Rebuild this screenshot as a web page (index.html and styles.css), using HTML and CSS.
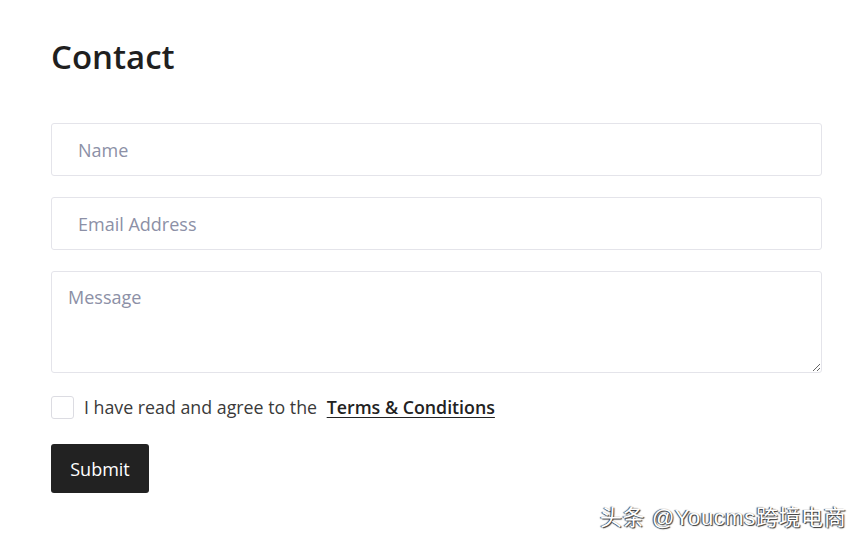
FILE: index.html
```html
<!DOCTYPE html>
<html lang="en">
<head>
    <meta charset="UTF-8">
    <meta name="viewport" content="width=device-width, initial-scale=1.0">
    <title>Contact</title>
    <link rel="stylesheet" href="styles.css">
</head>
<body>
    <div class="page">
        <h1 class="title">Contact</h1>
        <form class="contact-form">
            <input class="field" type="text" placeholder="Name">
            <input class="field" type="email" placeholder="Email Address">
            <textarea class="field message" placeholder="Message"></textarea>
            <label class="agree">
                <input class="check" type="checkbox">
                <span>I have read and agree to the <a href="#" class="terms">Terms &amp; Conditions</a></span>
            </label>
            <button class="submit" type="button">Submit</button>
        </form>
    </div>
    <div class="watermark">头条 @Youcms跨境电商</div>
</body>
</html>
```
FILE: styles.css
```css
body {
    margin: 0;
    background-color: #fff;
    font-family: "Open Sans", Arial, sans-serif;
    color: #222;
}
.page {
    padding: 34px 43px 0 51px;
}
.title {
    margin: 0 0 43px;
    font-size: 33px;
    font-weight: 600;
    line-height: 46px;
    color: #1f1f1f;
}
.contact-form {
    display: flex;
    flex-direction: column;
    gap: 21px;
}
.field {
    box-sizing: border-box;
    width: 771px;
    height: 53px;
    padding: 0 26px;
    border: 1px solid #e4e4ea;
    border-radius: 3px;
    font-family: "Open Sans", Arial, sans-serif;
    font-size: 18px;
    color: #333;
    outline: none;
}
.field::placeholder {
    color: #8c90a6;
}
.message {
    height: 102px;
    padding: 13px 16px;
    resize: vertical;
}
.agree {
    display: flex;
    align-items: center;
    gap: 10px;
    font-size: 17.8px;
    color: #3a3a3a;
    margin-top: 1px;
}
.check {
    appearance: none;
    width: 23px;
    height: 23px;
    margin: 0;
    border: 1px solid #dcdce2;
    border-radius: 3px;
    background: #fff;
}
.terms {
    margin-left: 5px;
    color: #222;
    font-weight: 600;
    text-decoration: underline;
    text-underline-offset: 3px;
}
.submit {
    align-self: flex-start;
    width: 98px;
    height: 49px;
    margin-top: 4px;
    border: none;
    border-radius: 3px;
    background-color: #222;
    color: #fff;
    font-family: "Open Sans", Arial, sans-serif;
    font-size: 18px;
    cursor: pointer;
}
.watermark {
    position: absolute;
    left: 600px;
    top: 499px;
    font-family: "Liberation Sans", "Noto Sans CJK SC", sans-serif;
    font-size: 22px;
    letter-spacing: 0.6px;
    color: #fff;
    text-shadow: 1px 1px 1px #333, -1px 0 1px #333;
}
```
